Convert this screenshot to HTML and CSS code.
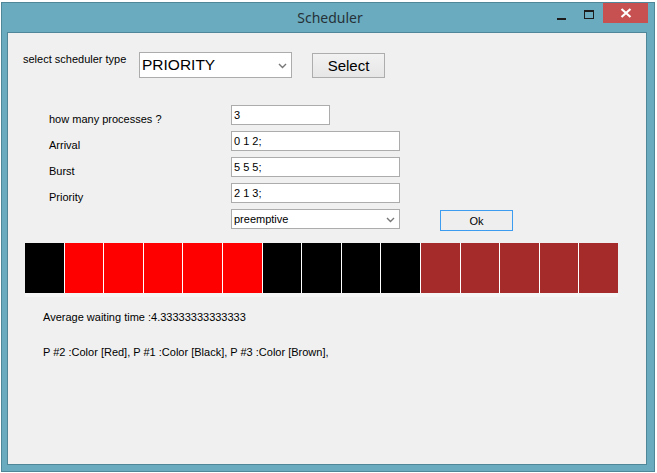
FILE: index.html
```html
<!DOCTYPE html>
<html>
<head>
<meta charset="utf-8">
<link rel="stylesheet" href="styles.css">
</head>
<body>
<div class="window">
  <div class="titlebar">
    <div class="title">Scheduler</div>
    <div class="caption-buttons">
      <span class="cb cb-min"><span class="min-bar"></span></span>
      <span class="cb cb-max"><span class="max-box"></span></span>
      <span class="cb cb-close">
        <svg width="12" height="10" viewBox="0 0 12 10"><path d="M1.5 1 L10.5 9 M10.5 1 L1.5 9" stroke="#fff" stroke-width="2.2"/></svg>
      </span>
    </div>
  </div>
  <div class="client">
    <div class="toprow">
      <div class="lbl lbl-type">select scheduler type</div>
      <div class="combo combo-big">
        <span class="combo-text">PRIORITY</span>
        <svg class="chev" width="9" height="6" viewBox="0 0 9 6"><path d="M1 1 L4.5 4.5 L8 1" fill="none" stroke="#777" stroke-width="1.4"/></svg>
      </div>
      <div class="btn btn-select">Select</div>
    </div>
    <div class="form">
      <div class="lbl flabel">how many processes ?</div>
      <div class="tb tb-short">3</div>
      <div class="lbl flabel">Arrival</div>
      <div class="tb">0 1 2;</div>
      <div class="lbl flabel">Burst</div>
      <div class="tb">5 5 5;</div>
      <div class="lbl flabel">Priority</div>
      <div class="tb">2 1 3;</div>
      <div></div>
      <div class="lastrow">
        <div class="combo combo-small">
          <span class="combo-text">preemptive</span>
          <svg class="chev" width="9" height="6" viewBox="0 0 9 6"><path d="M1 1 L4.5 4.5 L8 1" fill="none" stroke="#777" stroke-width="1.4"/></svg>
        </div>
        <div class="btn btn-ok">Ok</div>
      </div>
    </div>
    <div class="gantt">
      <div class="bars">
        <div class="cell black"></div>
        <div class="cell red"></div>
        <div class="cell red"></div>
        <div class="cell red"></div>
        <div class="cell red"></div>
        <div class="cell red"></div>
        <div class="cell black"></div>
        <div class="cell black"></div>
        <div class="cell black"></div>
        <div class="cell black"></div>
        <div class="cell brown"></div>
        <div class="cell brown"></div>
        <div class="cell brown"></div>
        <div class="cell brown"></div>
        <div class="cell brown"></div>
      </div>
    </div>
    <div class="lbl result avg">Average waiting time :4.33333333333333</div>
    <div class="lbl result legend">P #2 :Color [Red], P #1 :Color [Black], P #3 :Color [Brown],</div>
  </div>
</div>
</body>
</html>
```
FILE: styles.css
```css
* { box-sizing: border-box; }
html, body { margin: 0; padding: 0; }
body {
  background: #ffffff;
  width: 657px;
  height: 473px;
  padding: 2px 0 0 1px;
  overflow: hidden;
  font-family: "Liberation Sans", Arial, sans-serif;
}
.window {
  width: 654px;
  height: 470px;
  background: #6aabbf;
  border: 1px solid #4f8799;
  padding: 0 6px 6px 6px;
}
.titlebar {
  position: relative;
  height: 29px;
}
.title {
  text-align: center;
  font-family: "Noto Sans", "Open Sans", sans-serif;
  font-size: 14px;
  line-height: 29px;
  color: #263238;
  padding-left: 4px;
}
.caption-buttons {
  position: absolute;
  top: 0;
  right: 0;
  display: flex;
  align-items: flex-start;
}
.cb {
  display: flex;
  align-items: center;
  justify-content: center;
  height: 20px;
}
.cb-min { width: 26px; margin-right: 2px; }
.min-bar {
  display: block;
  width: 9px;
  height: 2px;
  background: #1c1c1c;
  margin-top: 12px;
}
.cb-max { width: 26px; margin-right: 1px; }
.max-box {
  display: block;
  width: 10px;
  height: 9px;
  border: 1px solid #1c1c1c;
  border-top-width: 2px;
  margin-top: 3px;
}
.cb-close {
  width: 45px;
  background: #c75050;
}
.cb-close svg { display: block; }
.client {
  width: 640px;
  height: 433px;
  background: #f0f0f0;
  border: 1px solid #4f8799;
  margin-left: -1px;
}
.lbl {
  font-size: 11px;
  line-height: 13px;
  color: #000;
  white-space: nowrap;
}
.toprow {
  display: flex;
  align-items: flex-start;
  margin-top: 19px;
  padding-left: 15px;
}
.lbl-type {
  width: 116px;
  margin-top: 1px;
}
.combo {
  position: relative;
  background: #fff;
  border: 1px solid #acacac;
  display: flex;
  align-items: center;
}
.combo .chev {
  position: absolute;
  right: 4px;
  top: 50%;
  margin-top: -2px;
}
.combo-big {
  width: 153px;
  height: 26px;
  font-size: 15.5px;
  padding-left: 2px;
  color: #000;
}
.btn {
  display: flex;
  align-items: center;
  justify-content: center;
  border: 1px solid #adadad;
  background: linear-gradient(#f2f2f2, #e6e6e6);
  color: #000;
}
.btn-select {
  width: 73px;
  height: 25px;
  margin-left: 20px;
  margin-top: 1px;
  font-size: 15px;
}
.form {
  display: grid;
  grid-template-columns: 182px 1fr;
  grid-auto-rows: 20px;
  row-gap: 6px;
  margin-top: 27px;
  padding-left: 41px;
}
.flabel {
  padding-top: 8px;
}
.tb {
  width: 169px;
  height: 20px;
  background: #fff;
  border: 1px solid #acacac;
  font-size: 11px;
  line-height: 18px;
  padding-left: 2px;
  color: #000;
}
.tb-short { width: 99px; }
.lastrow {
  display: flex;
  align-items: flex-start;
}
.combo-small {
  width: 169px;
  height: 20px;
  font-size: 11px;
  padding-left: 2px;
}
.combo-small .chev { right: 4px; }
.btn-ok {
  width: 73px;
  height: 21px;
  margin-left: 40px;
  margin-top: 1px;
  font-size: 11px;
  border-color: #3c9cf0;
  background: #eeeeee;
}
.gantt {
  width: 593px;
  height: 54px;
  margin-top: 14px;
  margin-left: 17px;
  background: #f5f5f5;
}
.bars {
  display: grid;
  grid-template-columns: repeat(15, 1fr);
  column-gap: 1px;
  height: 50px;
  background: #ffffff;
}
.cell.black { background: #000000; }
.cell.red { background: #ff0000; }
.cell.brown { background: #a52a2a; }
.result { padding-left: 35px; }
.avg { margin-top: 14px; }
.legend { margin-top: 22px; }
```
